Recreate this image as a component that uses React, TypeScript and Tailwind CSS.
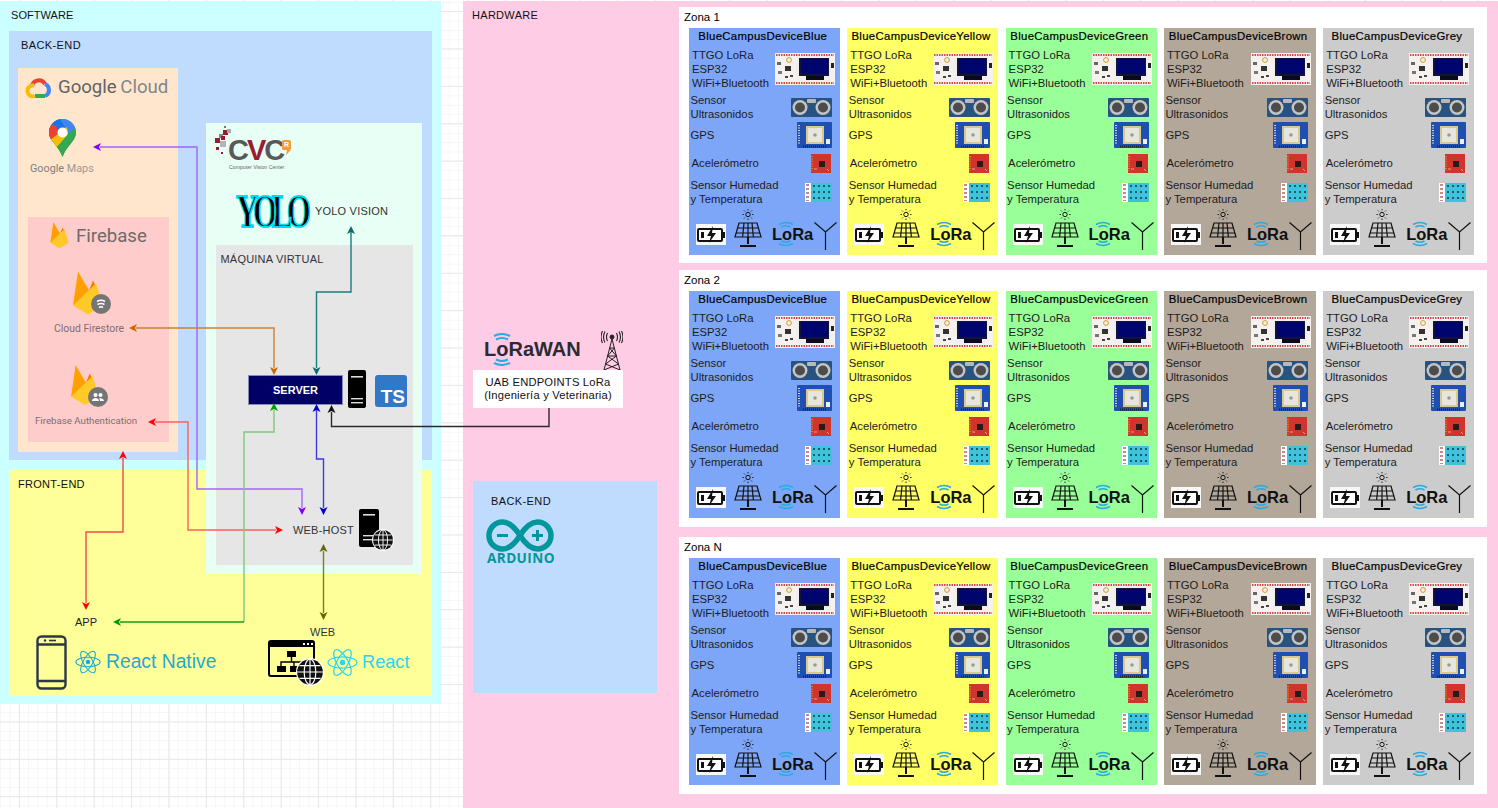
import React from 'react';

const font = "font-['Liberation_Sans',Arial,sans-serif]";

// ---- small board pictures used by every device card ----
const TtgoBoard = () => (
  <svg viewBox="0 0 60 32" className="w-[60px] h-[32px] shrink-0">
    <rect width="60" height="32" fill="#f4f1ee" />
    <line x1="1" y1="2" x2="59" y2="2" stroke="#d24a4a" strokeWidth="2" strokeDasharray="1.5 1" />
    <line x1="1" y1="30" x2="59" y2="30" stroke="#d24a4a" strokeWidth="2" strokeDasharray="1.5 1" />
    <rect x="2" y="9" width="4" height="3" fill="#666" />
    <rect x="10" y="13" width="6" height="5" fill="#333" />
    <rect x="3" y="18" width="4" height="3" fill="#777" />
    <rect x="10" y="23" width="3" height="2" fill="#444" />
    <rect x="15" y="22" width="3" height="2" fill="#444" />
    <circle cx="14" cy="7" r="2.4" fill="none" stroke="#d49a2a" strokeWidth="1" />
    <rect x="22" y="4" width="34" height="24" fill="#f0eeee" />
    <rect x="24" y="5" width="30" height="18" fill="#14143a" />
    <rect x="26" y="6" width="27" height="15" fill="#00046e" />
    <rect x="31" y="23" width="18" height="4" fill="#0a0a1e" />
    <rect x="56" y="10" width="3" height="5" fill="#222" />
  </svg>
);

const UltrasonicBoard = () => (
  <svg viewBox="0 0 41 19" className="w-[41px] h-[19px] shrink-0">
    <rect width="41" height="19" rx="1" fill="#28527f" />
    <rect x="16" y="1" width="9" height="4" rx="1" fill="#b8b8b8" />
    <circle cx="9" cy="9.5" r="7.5" fill="#c4c4c4" />
    <circle cx="9" cy="9.5" r="5" fill="#4c4c4c" />
    <circle cx="32" cy="9.5" r="7.5" fill="#c4c4c4" />
    <circle cx="32" cy="9.5" r="5" fill="#4c4c4c" />
  </svg>
);

const GpsBoard = () => (
  <svg viewBox="0 0 35 26" className="w-[35px] h-[26px] shrink-0">
    <rect width="35" height="26" rx="1" fill="#1f4fb0" />
    <line x1="2" y1="3" x2="2" y2="23" stroke="#d8d8d8" strokeWidth="2" strokeDasharray="1 1.5" />
    <line x1="6" y1="24.5" x2="30" y2="24.5" stroke="#222" strokeWidth="2" strokeDasharray="1 1" />
    <rect x="9" y="4" width="18" height="18" fill="#d9c98a" />
    <rect x="11" y="6" width="14" height="14" fill="#e6e6de" />
    <circle cx="18" cy="13" r="1.8" fill="#9a9a90" />
    <rect x="29" y="17" width="4" height="5" fill="#f0f0f0" />
  </svg>
);

const AccelBoard = () => (
  <svg viewBox="0 0 20 19" className="w-[20px] h-[19px] shrink-0">
    <rect width="20" height="19" fill="#d0342c" />
    <rect x="8" y="7" width="6" height="6" fill="#2a1a1a" />
    <line x1="1" y1="2" x2="1" y2="17" stroke="#e8a020" strokeWidth="1.4" strokeDasharray="1 1.4" />
    <path d="M16 15 L18 17 M3 15h3" stroke="#f19a90" strokeWidth="1" />
  </svg>
);

const DhtBoard = () => (
  <svg viewBox="0 0 27 19" className="w-[27px] h-[19px] shrink-0">
    <rect width="27" height="19" fill="#fff" />
    <line x1="2.5" y1="1" x2="2.5" y2="18" stroke="#c88a8a" strokeWidth="3" strokeDasharray="2 2" />
    <rect x="6" y="0" width="21" height="19" fill="#3fc3dd" />
    <g fill="#1e5a66">
      <rect x="8" y="2" width="2" height="2" />
      <rect x="13" y="2" width="2" height="2" />
      <rect x="18" y="2" width="2" height="2" />
      <rect x="23" y="2" width="2" height="2" />
      <rect x="8" y="8" width="2" height="2" />
      <rect x="13" y="8" width="2" height="2" />
      <rect x="18" y="8" width="2" height="2" />
      <rect x="23" y="8" width="2" height="2" />
      <rect x="8" y="14" width="2" height="2" />
      <rect x="13" y="14" width="2" height="2" />
      <rect x="18" y="14" width="2" height="2" />
      <rect x="23" y="14" width="2" height="2" />
    </g>
  </svg>
);

const Battery = () => (
  <svg viewBox="0 0 30 21" className="w-[30px] h-[21px] shrink-0">
    <rect width="30" height="21" fill="#f7f7f7" />
    <rect x="2" y="5" width="24" height="12" rx="1" fill="#fff" stroke="#111" strokeWidth="2" />
    <rect x="27" y="8" width="2" height="6" fill="#111" />
    <rect x="5" y="8" width="3" height="6" fill="#111" />
    <path d="M17 2 L11 12 H15 L13 19 L20 9 H16 Z" fill="#111" />
  </svg>
);

const Solar = () => (
  <svg viewBox="0 0 28 39" className="w-[28px] h-[39px] shrink-0" fill="none" stroke="#111">
    <circle cx="14" cy="5.5" r="2.2" strokeWidth="1" />
    <path d="M14 0v1.4M14 9.6V11M8.5 5.5h1.4M18.1 5.5h1.4M10 1.5l1 1M17 8.5l1 1M18 1.5l-1 1M11 8.5l-1 1" strokeWidth="0.9" />
    <path d="M5 14H23L27 28H1Z M3.6 19H24.4 M2.2 24H25.8 M10 14L8.6 28 M18 14L19.4 28 M14 14V28" strokeWidth="1.2" />
    <path d="M14 28V35 M6 37H22" strokeWidth="2" />
  </svg>
);

const Antenna = () => (
  <svg viewBox="0 0 23 28" className="w-[23px] h-[28px] shrink-0" fill="none" stroke="#111" strokeWidth="1.2">
    <path d="M0.5 0.5 L11.5 10 L22.5 0.5 M11.5 10 V28" />
  </svg>
);

const LoraLogo = () => (
  <div className={`relative w-[41px] h-[26px] flex items-center shrink-0 ${font}`}>
    <svg viewBox="0 0 41 26" className="absolute left-0 top-0 w-[41px] h-[26px]" fill="none" stroke="#29abe2" strokeWidth="1.5">
      <path d="M7 3.5Q14 -0.5 21 3.5 M9.5 6Q14 3.5 18.5 6 M7 22.5Q14 26.5 21 22.5 M9.5 20Q14 22.5 18.5 20" />
    </svg>
    <span className="relative text-[16.5px] leading-none font-bold text-[#111]">LoRa</span>
  </div>
);

// ---- logos of the left part ----
const GoogleCloudMark = () => (
  <svg viewBox="0 0 27 22" className="w-[27px] h-[22px]" fill="none" strokeWidth="4">
    <path d="M7 10 A7 7 0 0 1 20 8" stroke="#ea4335" />
    <path d="M20 8 A6.5 6.5 0 0 1 20 20" stroke="#4285f4" />
    <path d="M20 20 H10" stroke="#34a853" />
    <path d="M10 20 A5.5 5.5 0 1 1 9 9.5" stroke="#fbbc05" />
  </svg>
);

const MapsPin = () => (
  <svg viewBox="0 0 27 38" className="w-[27px] h-[38px]">
    <clipPath id="pin">
      <path d="M13.5 0C6 0 0 6 0 13.5 0 22 9 26 13.5 38 18 26 27 22 27 13.5 27 6 21 0 13.5 0Z" />
    </clipPath>
    <g clipPath="url(#pin)">
      <rect width="27" height="38" fill="#34a853" />
      <path d="M0 0H27V9L0 27Z" fill="#4285f4" />
      <path d="M0 0H11L16 8 0 22Z" fill="#1a73e8" />
      <path d="M0 4L8 8 9 17 0 22Z" fill="#ea4335" />
      <path d="M0 22L18 8 19 16 8 38H0Z" fill="#fbbc04" />
      <path d="M6 30L21 13 27 9V38H6Z" fill="#34a853" />
    </g>
    <circle cx="13.5" cy="13.5" r="5" fill="#fff" />
  </svg>
);

const Flame = ({ className }: { className: string }) => (
  <svg viewBox="0 0 30 44" className={className}>
    <path d="M0 34L5 0 16 19Z" fill="#ffa000" />
    <path d="M0 34L16 19 20 9 24 17Z" fill="#f57c00" />
    <path d="M0 34L23 12 30 34 15 43Z" fill="#ffca28" />
  </svg>
);

const FirebaseBadge = ({ users }: { users?: boolean }) => (
  <svg viewBox="0 0 20 20" className="w-[20px] h-[20px]">
    <circle cx="10" cy="10" r="10" fill="#757575" />
    {users ? (
      <g fill="#fff">
        <circle cx="7.5" cy="8" r="2" />
        <circle cx="12.5" cy="8" r="2" />
        <path d="M4 14c0-2 2-3 3.5-3S11 12 11 14Z M12 14c0-1-.4-2-1-2.6 2-.8 5 .4 5 2.6Z" />
      </g>
    ) : (
      <path d="M6 7.5Q10 5 14 7.5 M6.5 10.5Q10 8.5 13.5 10.5 M8 13.5Q10 12 12 13.5" fill="none" stroke="#fff" strokeWidth="1.6" />
    )}
  </svg>
);

const CvcSquares = () => (
  <svg viewBox="0 0 17 29" className="w-[17px] h-[29px]">
    <rect x="9" y="0" width="2" height="2" fill="#777" />
    <rect x="8" y="4" width="5" height="5" fill="#9b1c31" />
    <rect x="12" y="3" width="4" height="4" fill="#aaa" />
    <rect x="4" y="8" width="4" height="4" fill="#888" />
    <rect x="0" y="12" width="5" height="5" fill="#9b1c31" />
    <rect x="6" y="10" width="4" height="4" fill="#9b1c31" />
    <rect x="5" y="15" width="6" height="6" fill="#b5b5b5" />
    <rect x="1" y="21" width="3" height="3" fill="#9b1c31" />
    <rect x="6" y="26" width="2" height="2" fill="#9b1c31" />
  </svg>
);

const ServerTower = () => (
  <svg viewBox="0 0 18 38" className="w-[18px] h-[38px]">
    <rect width="18" height="38" rx="2" fill="#000" />
    <rect x="3" y="6" width="12" height="1.6" fill="#ddd" />
    <rect x="3" y="28" width="12" height="1.4" fill="#ddd" />
    <rect x="3" y="32" width="12" height="1.4" fill="#ddd" />
  </svg>
);

const Globe = ({ size }: { size: string }) => (
  <svg viewBox="0 0 24 24" className={size} fill="none" stroke="#000">
    <circle cx="12" cy="12" r="12" fill="#fff" stroke="none" />
    <circle cx="12" cy="12" r="11" fill="#111" stroke="none" />
    <g stroke="#fff" strokeWidth="1">
      <ellipse cx="12" cy="12" rx="5" ry="11" />
      <path d="M12 1V23 M1 12H23 M3 6.5H21 M3 17.5H21" />
    </g>
  </svg>
);

const HostTower = () => (
  <svg viewBox="0 0 20 38" className="w-[20px] h-[38px]">
    <rect width="20" height="38" rx="2" fill="#000" />
    <rect x="4" y="5" width="12" height="1.6" fill="#ddd" />
    <rect x="4" y="26" width="10" height="1.4" fill="#ddd" />
    <rect x="4" y="30" width="10" height="1.4" fill="#ddd" />
  </svg>
);

const WebWindow = () => (
  <svg viewBox="0 0 47 38" className="w-[47px] h-[38px]">
    <rect x="1" y="1" width="45" height="35" rx="2" fill="#ffff99" stroke="#000" strokeWidth="2" />
    <rect x="1" y="1" width="45" height="6" fill="#000" />
    <g fill="#fff">
      <rect x="35" y="3" width="2" height="2" />
      <rect x="39" y="3" width="2" height="2" />
      <rect x="43" y="3" width="2" height="2" />
    </g>
    <g fill="#000">
      <rect x="19" y="11" width="9" height="6" />
      <rect x="9" y="26" width="9" height="6" />
      <rect x="22" y="26" width="8" height="6" />
    </g>
    <path d="M23.5 17V22 M13 26V22H34V26 M26 22V26" stroke="#000" strokeWidth="1.4" fill="none" />
  </svg>
);

const Atom = ({ color, size }: { color: string; size: string }) => (
  <svg viewBox="0 0 32 30" className={size} fill="none" stroke={color} strokeWidth="1.3">
    <ellipse cx="16" cy="15" rx="15" ry="5.8" />
    <ellipse cx="16" cy="15" rx="15" ry="5.8" transform="rotate(60 16 15)" />
    <ellipse cx="16" cy="15" rx="15" ry="5.8" transform="rotate(120 16 15)" />
    <circle cx="16" cy="15" r="2.8" fill={color} stroke="none" />
  </svg>
);

const Phone = () => (
  <svg viewBox="0 0 31 55" className="w-[31px] h-[55px]" fill="none" stroke="#2d3648" strokeWidth="2.4">
    <rect x="1.5" y="1.5" width="28" height="52" rx="4" />
    <path d="M1.5 9.5H29.5 M1.5 46H29.5" />
    <circle cx="9" cy="5.5" r="1.2" fill="#2d3648" stroke="none" />
    <path d="M13 5.5H20" strokeWidth="1.6" />
  </svg>
);

const Tower = () => (
  <svg viewBox="0 0 22 39" className="w-[22px] h-[39px]" fill="none" stroke="#222" strokeWidth="1">
    <path d="M11 8L3 39 M11 8L19 39 M8.6 17H13.4 M6.6 25L15.4 25 M8.6 17L15.4 25 M13.4 17L6.6 25 M6.6 25L17.6 33 M15.4 25L4.6 33 M3 39L17.6 33 M19 39L4.6 33" />
    <circle cx="11" cy="6" r="2" fill="#222" />
    <path d="M6.5 2Q4.5 6 6.5 10 M15.5 2Q17.5 6 15.5 10 M4 0.5Q1 6 4 11.5 M18 0.5Q21 6 18 11.5 M1.5 0Q-1.5 6 1.5 12 M20.5 0Q23.5 6 20.5 12" strokeWidth="1.1" />
  </svg>
);

const ArduinoMark = () => (
  <svg viewBox="0 0 68 33" className="w-[68px] h-[33px]" fill="none" stroke="#00979c" strokeWidth="5.5">
    <path d="M34 16.5C28 7 23 3 16.5 3 9 3 3 9 3 16.5S9 30 16.5 30C23 30 28 26 34 16.5 40 7 45 3 51.5 3 59 3 65 9 65 16.5S59 30 51.5 30C45 30 40 26 34 16.5Z" />
    <path d="M11 16.5H22 M46 16.5H57 M51.5 11V22" strokeWidth="3" />
  </svg>
);

// ---- one device card ----
type Device = { name: string; bg: string };

const devices: Device[] = [
  { name: 'BlueCampusDeviceBlue', bg: 'bg-[#7ea6f8]' },
  { name: 'BlueCampusDeviceYellow', bg: 'bg-[#ffff66]' },
  { name: 'BlueCampusDeviceGreen', bg: 'bg-[#99ff99]' },
  { name: 'BlueCampusDeviceBrown', bg: 'bg-[#b3a79a]' },
  { name: 'BlueCampusDeviceGrey', bg: 'bg-[#cccccc]' },
];

const DeviceCard = ({ device }: { device: Device }) => (
  <div className={`${device.bg} h-[227px] flex flex-col pl-[1.5px] pr-[5px] text-[#1c1c1c] text-[11.3px] leading-[14px] ${font}`}>
    <div className="h-[18px] pt-[1px] text-center text-[11.4px] tracking-[0.3px] text-black [-webkit-text-stroke:0.2px_#000] whitespace-nowrap">
      {device.name}
    </div>
    <div className="h-[42px] mt-[2px] flex items-center justify-between">
      <div className="pl-[1.5px] whitespace-nowrap">
        TTGO LoRa
        <br />
        ESP32
        <br />
        WiFi+Bluetooth
      </div>
      <TtgoBoard />
    </div>
    <div className="h-[28px] mt-[3px] flex items-center justify-between pr-[3px]">
      <div>
        Sensor
        <br />
        Ultrasonidos
      </div>
      <UltrasonicBoard />
    </div>
    <div className="h-[26px] mt-[1px] flex items-center justify-between pr-[3px]">
      <div>GPS</div>
      <GpsBoard />
    </div>
    <div className="h-[20px] mt-[5px] flex items-center justify-between pr-[4px]">
      <div className="pl-[1px]">Acelerómetro</div>
      <AccelBoard />
    </div>
    <div className="h-[28px] mt-[5px] flex items-center justify-between pr-[3px]">
      <div>
        Sensor Humedad
        <br />y Temperatura
      </div>
      <DhtBoard />
    </div>
    <div className="h-[42px] mt-[2px] pl-[5.5px] flex items-end gap-[8px]">
      <div className="mb-[5px]"><Battery /></div>
      <div className="mb-[2px]"><Solar /></div>
      <div className="ml-[2px] mb-[3px]"><LoraLogo /></div>
      <div className="-ml-[7px] mb-[0px]"><Antenna /></div>
    </div>
  </div>
);

const Zone = ({ title, className }: { title: string; className: string }) => (
  <div className={`bg-white w-[808px] pl-[10px] ${className}`}>
    <div className={`h-[21px] pt-[3px] -ml-[5px] text-[11.5px] leading-[14px] text-black ${font}`}>{title}</div>
    <div className="grid grid-cols-[151px_151px_151px_152px_151px] gap-x-[7.3px]">
      {devices.map((d) => (
        <DeviceCard key={d.name} device={d} />
      ))}
    </div>
  </div>
);

// ---- connectors of the diagram ----
const dirs: Record<string, [number, number]> = { l: [-1, 0], r: [1, 0], u: [0, -1], d: [0, 1] };

const Head = ({ x, y, dir, color }: { x: number; y: number; dir: string; color: string }) => {
  const [dx, dy] = dirs[dir];
  const back = (len: number, side: number) => `${x - dx * len - dy * side},${y - dy * len + dx * side}`;
  return <polygon points={`${x},${y} ${back(8, 4)} ${back(6, 0)} ${back(8, -4)}`} fill={color} />;
};

const connectors = [
  { d: 'M100 147H197V489H302V508', line: '#a364ff', color: '#7f00ff', heads: [[93, 147, 'l'], [302, 515, 'd']] },
  { d: 'M136 328H274V368', line: '#cf7f33', color: '#cc6600', heads: [[129, 328, 'l'], [274, 375, 'd']] },
  { d: 'M316.5 368V292H351V232', line: '#1b7d7d', color: '#0e6b6b', heads: [[316.5, 375, 'd'], [351, 226, 'u']] },
  { d: 'M155 422H188V530H276', line: '#ff5f5f', color: '#ff0000', heads: [[148, 422, 'l'], [283, 530, 'r']] },
  { d: 'M123 458V532H86V603', line: '#f04a4a', color: '#ff0000', heads: [[123, 451, 'u'], [86, 610, 'd']] },
  { d: 'M274 410V432H244V622', line: '#7cc87c', color: '#00a000', heads: [[274, 403, 'u']] },
  { d: 'M244 622H120', line: '#1a9a1a', color: '#009900', heads: [[113, 622, 'l']] },
  { d: 'M316.5 410V459H323.5V508', line: '#3a3ae0', color: '#0000cc', heads: [[316.5, 404, 'u'], [323.5, 515, 'd']] },
  { d: 'M331.5 412V426.5H549V408', line: '#2a2a2a', color: '#111111', heads: [[331.5, 405, 'u']] },
  { d: 'M323.5 551V613', line: '#7a7a30', color: '#666600', heads: [[323.5, 544, 'u'], [323.5, 620, 'd']] },
];

const Connectors = () => (
  <svg viewBox="0 0 1498 808" className="absolute left-0 top-0 w-[1498px] h-[808px] pointer-events-none" fill="none">
    {connectors.map((c) => (
      <g key={c.d}>
        <path d={c.d} stroke={c.line} strokeWidth="1.4" />
        {c.heads.map(([x, y, dir]) => (
          <Head key={`${x}-${y}`} x={x as number} y={y as number} dir={dir as string} color={c.color} />
        ))}
      </g>
    ))}
  </svg>
);

export default function App() {
  return (
    <div
      className={`relative w-[1498px] h-[808px] overflow-hidden flex items-start bg-white bg-[linear-gradient(#e8e8e8_1px,transparent_1px),linear-gradient(90deg,#e8e8e8_1px,transparent_1px),linear-gradient(#f6f6f6_1px,transparent_1px),linear-gradient(90deg,#f6f6f6_1px,transparent_1px)] bg-[size:37.4px_37.4px,37.4px_37.4px,9.35px_9.35px,9.35px_9.35px] bg-[position:19px_11px,19px_11px,0px_2px,0px_2px] text-[11px] ${font}`}
    >
      {/* Software */}
      <div className="mt-[1px] w-[441px] h-[703px] bg-[#ccffff] px-[9px] flex flex-col">
        <div className="h-[30px] pt-[7px] pl-[2px] leading-[14px] tracking-[0.05px] text-[#111]">SOFTWARE</div>
        <div className="h-[429px] bg-[#bfdcff] px-[9px]">
          <div className="h-[37px] pt-[7px] pl-[3px] leading-[14px] tracking-[0.4px] text-[#111]">BACK-END</div>
          <div className="w-[160px] h-[384px] bg-[#ffe6cc] flex flex-col pl-[10px]">
            <div className="mt-[8px] -ml-[3px] flex items-center gap-[6px] text-[18.6px] leading-[22px] font-['Roboto',sans-serif] text-[#5f6368] whitespace-nowrap">
              <GoogleCloudMark />
              <span>
                Google <span className="-ml-[1px] text-[#80868b]">Cloud</span>
              </span>
            </div>
            <div className="ml-[21px] mt-[21px]"><MapsPin /></div>
            <div className="-ml-[1px] mt-[6px] text-[10.8px] leading-[12px] text-[#808080] font-['Roboto',sans-serif] whitespace-nowrap">
              <span className="ml-[3px]">Google <span className="text-[#999]">Maps</span></span>
            </div>
            <div className="w-[141px] h-[225px] mt-[42px] bg-[#ffcccc] flex flex-col text-[#7e6d72] font-['Roboto',sans-serif]">
              <div className="mt-[5px] ml-[22px] flex items-center gap-[7px] text-[18.6px] leading-[26px] text-[#6e6a6a]">
                <Flame className="w-[19px] h-[27px]" />
                Firebase
              </div>
              <div className="relative ml-[45px] mt-[22px] w-[30px] h-[45px]">
                <Flame className="w-[30px] h-[45px]" />
                <div className="absolute left-[18px] top-[23px]"><FirebaseBadge /></div>
              </div>
              <div className="ml-[26px] mt-[7px] text-[10.4px] leading-[12px] whitespace-nowrap">Cloud Firestore</div>
              <div className="relative ml-[43px] mt-[30px] w-[28px] h-[40px]">
                <Flame className="w-[28px] h-[41px]" />
                <div className="absolute left-[17px] top-[22px]"><FirebaseBadge users /></div>
              </div>
              <div className="ml-[7px] mt-[10px] text-[9.7px] leading-[12px] whitespace-nowrap">Firebase Authentication</div>
            </div>
          </div>
        </div>
        <div className="h-[226px] mt-[10px] bg-[#ffff99] pl-[9px] pt-[7px] leading-[14px] tracking-[0.3px] text-[#111]">FRONT-END</div>
      </div>

      {/* Hardware */}
      <div className="ml-[22px] mt-[1px] w-[1035px] h-[807px] bg-[#ffcce6] flex">
        <div className="w-[216px] shrink-0 flex flex-col pl-[10px]">
          <div className="h-[14px] mt-[7px] -ml-[1px] leading-[14px] tracking-[0.3px] text-[#111]">HARDWARE</div>
          <div className="w-[150px] h-[38px] mt-[348px] bg-white flex flex-col justify-center items-center text-[11.2px] leading-[13.5px] tracking-[0.2px] text-[#111] text-center">
            <div>UAB ENDPOINTS LoRa</div>
            <div>(Ingeniería y Veterinaria)</div>
          </div>
          <div className="w-[184px] h-[212px] mt-[73px] bg-[#bfdcff] pl-[18px] pt-[13px] leading-[14px] tracking-[0.4px] text-[#111]">BACK-END</div>
        </div>
        <div className="flex flex-col pt-[6px]">
          <Zone title="Zona 1" className="h-[256px]" />
          <Zone title="Zona 2" className="h-[257px] mt-[7px]" />
          <Zone title="Zona N" className="h-[257px] mt-[10px]" />
        </div>
      </div>

      {/* CVC panel sits over back-end and front-end */}
      <div className="absolute left-[206px] top-[123px] w-[216px] h-[451px] bg-[#e8fff5] pl-[10px] pt-[122px]">
        <div className="w-[197px] h-[320px] bg-[#e6e6e6] pl-[4.5px] pt-[7px] text-[11px] leading-[14px] tracking-[0.2px] text-[#333]">MÁQUINA VIRTUAL</div>
      </div>

      {/* Nodes of the diagram */}
      <div className="absolute left-[215px] top-[126px]"><CvcSquares /></div>
      <div className="absolute left-[228px] top-[138px] text-[29px] leading-[24px] font-bold tracking-[-2px] text-[#58595b]">
        C<span className="text-[#9b1c31]">V</span>C
      </div>
      <svg viewBox="0 0 10 15" className="absolute left-[282px] top-[140px] w-[10px] h-[15px]">
        <rect width="9" height="10" rx="1.5" fill="#f39c3d" />
        <path d="M5 10H9L4 15Z" fill="#f39c3d" />
      </svg>
      <div className="absolute left-[282px] top-[140px] w-[9px] text-[7px] leading-[10px] font-bold text-center text-white">R</div>
      <div className="absolute left-[229px] top-[164px] text-[5.2px] leading-[6px] text-[#666] whitespace-nowrap">Computer Vision Center</div>
      <div className="absolute left-[236px] top-[198px] text-[31px] leading-[28px] font-bold tracking-[-5.5px] scale-y-[1.5] text-black [-webkit-text-stroke:1.2px_#00dcea] font-['Liberation_Serif',serif]">YOLO</div>
      <div className="absolute left-[264px] top-[201px] w-[3px] h-[4px] rounded-full bg-white" />
      <div className="absolute left-[294px] top-[203px] w-[3px] h-[4px] rounded-full bg-white" />
      <div className="absolute left-[315px] top-[204px] leading-[14px] tracking-[0.2px] text-[#333] whitespace-nowrap">YOLO VISION</div>

      <div className="absolute left-[248px] top-[375px] w-[95px] h-[30px] bg-[#000066] border border-[#8a8ab8] flex items-center justify-center text-[11px] font-bold text-white">SERVER</div>
      <div className="absolute left-[348px] top-[370px]"><ServerTower /></div>
      <div className="absolute left-[375px] top-[375px] w-[32px] h-[32px] rounded-[3px] bg-[#3178c6] flex items-end justify-end pr-[2px] text-[19px] leading-[20px] font-bold text-white">TS</div>

      <div className="absolute left-[293px] top-[523px] leading-[14px] tracking-[0.2px] text-[#333]">WEB-HOST</div>
      <div className="absolute left-[359px] top-[509px]"><HostTower /></div>
      <div className="absolute left-[372px] top-[529px]"><Globe size="w-[22px] h-[22px]" /></div>

      <div className="absolute left-[75px] top-[615px] leading-[14px] text-[#222]">APP</div>
      <div className="absolute left-[36px] top-[635px]"><Phone /></div>
      <div className="absolute left-[75px] top-[649px]"><Atom color="#1fa8d6" size="w-[26px] h-[26px]" /></div>
      <div className="absolute left-[106px] top-[650px] text-[19.3px] leading-[24px] text-[#1fa8d6] whitespace-nowrap">React Native</div>

      <div className="absolute left-[310px] top-[625px] leading-[14px] text-[#333]">WEB</div>
      <div className="absolute left-[268px] top-[640px]"><WebWindow /></div>
      <div className="absolute left-[296px] top-[658px]"><Globe size="w-[28px] h-[28px]" /></div>
      <div className="absolute left-[327px] top-[648px]"><Atom color="#27d6f7" size="w-[31px] h-[29px]" /></div>
      <div className="absolute left-[362px] top-[650px] text-[18.2px] leading-[24px] text-[#27d6f7]">React</div>

      {/* LoRaWAN logo and tower */}
      <div className="absolute left-[484px] top-[337px] text-[20px] leading-[24px] font-bold text-[#2b2b33] whitespace-nowrap">LoRaWAN</div>
      <svg viewBox="0 0 24 33" className="absolute left-[490px] top-[333px] w-[24px] h-[33px]" fill="none" stroke="#29abe2" strokeWidth="2">
        <path d="M4 3Q12 -1 20 3 M6 6.5Q12 3.5 18 6.5 M4 30Q12 34 20 30 M6 26.5Q12 29.5 18 26.5" />
      </svg>
      <div className="absolute left-[601px] top-[331px]"><Tower /></div>

      {/* Arduino logo */}
      <div className="absolute left-[486px] top-[519px]"><ArduinoMark /></div>
      <div className="absolute left-[487px] top-[549px] text-[13.6px] leading-[18px] font-bold tracking-[0.4px] font-['Open_Sans',sans-serif] text-[#00979c]">ARDUINO</div>

      <Connectors />
    </div>
  );
}
